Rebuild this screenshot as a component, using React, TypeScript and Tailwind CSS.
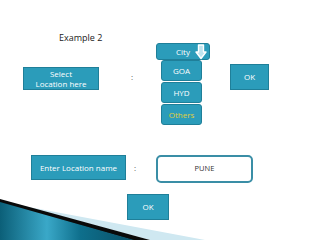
import React from 'react';

const FONT = { fontFamily: '"Open Sans", "DejaVu Sans", sans-serif' };

const Swoosh: React.FC = () => (
  <svg className="absolute left-0 bottom-0" width="210" height="45" viewBox="0 195 210 45">
    <defs>
      <linearGradient id="sw" x1="0" y1="0" x2="1" y2="0">
        <stop offset="0" stopColor="#0b5f78" />
        <stop offset="0.35" stopColor="#3aa8c8" />
        <stop offset="0.6" stopColor="#0e6f8c" />
        <stop offset="1" stopColor="#0a4f66" />
      </linearGradient>
    </defs>
    <polygon points="18,205 205,240 150,240" fill="#cfe8f1" />
    <polygon points="0,199 150,240 132,240 0,203" fill="#0a0a0a" />
    <polygon points="0,202 134,240 0,240" fill="url(#sw)" />
  </svg>
);

const DownArrow: React.FC = () => (
  <svg className="absolute right-[2px] top-[0px]" width="12" height="16" viewBox="0 0 12 16">
    <path d="M3.5 1 H8.5 V8 H11 L6 14.5 L1 8 H3.5 Z" fill="#bfe4ef" stroke="#ffffff" strokeWidth="1.4" strokeLinejoin="round" />
  </svg>
);

const Option: React.FC<{ label: string; yellow?: boolean }> = ({ label, yellow }) => (
  <div className={`w-[41px] h-[21px] rounded-[3px] bg-[#2b9cba] border border-[#1f7f99] flex items-center justify-center text-[8px] ${yellow ? 'text-[#e0cf3a]' : 'text-white'}`}>
    {label}
  </div>
);

const App: React.FC = () => {
  return (
    <div className="relative w-[320px] h-[240px] overflow-hidden bg-white" style={FONT}>
      <div className="pt-[32px] pl-[59px] text-[9px] leading-[11px] text-[#222]">Example 2</div>

      <div className="flex items-start h-[81px]">
        <div className="ml-[23px] mt-[24px] w-[76px] h-[23px] bg-[#2b9cba] border border-[#1f7f99] flex flex-col items-center justify-center text-white text-[8px] leading-[9.5px]">
          <div>Select</div>
          <div>Location here</div>
        </div>
        <div className="ml-[32px] mt-[29px] w-[2px] text-[8px] leading-[9px] text-[#555]">:</div>
        <div className="ml-[23px] flex flex-col">
          <div className="relative w-[54px] h-[17px] rounded-[3px] bg-[#2b9cba] border border-[#1f7f99] flex items-center justify-center text-white text-[8px]">
            City
            <DownArrow />
          </div>
          <div className="ml-[5px] flex flex-col gap-[1px]">
            <Option label="GOA" />
            <Option label="HYD" />
            <Option label="Others" yellow />
          </div>
        </div>
        <div className="ml-[20px] mt-[21px] w-[39px] h-[26px] bg-[#2b9cba] border border-[#1f7f99] flex items-center justify-center text-white text-[8px]">
          OK
        </div>
      </div>

      <div className="flex items-start mt-[31px]">
        <div className="ml-[31px] w-[95px] h-[25px] bg-[#2b9cba] border border-[#1f7f99] flex items-center justify-center text-white text-[8px]">
          Enter Location name
        </div>
        <div className="ml-[8px] mt-[8px] w-[2px] text-[8px] leading-[9px] text-[#555]">:</div>
        <div className="ml-[20px] w-[97px] h-[28px] rounded-[5px] bg-white border-2 border-[#3a8ea6] flex items-center justify-center text-[#333] text-[7.5px]">
          PUNE
        </div>
      </div>

      <div className="flex mt-[11px]">
        <div className="ml-[127px] w-[42px] h-[26px] bg-[#2b9cba] border border-[#1f7f99] flex items-center justify-center text-white text-[8px]">
          OK
        </div>
      </div>

      <Swoosh />
    </div>
  );
};

export default App;
